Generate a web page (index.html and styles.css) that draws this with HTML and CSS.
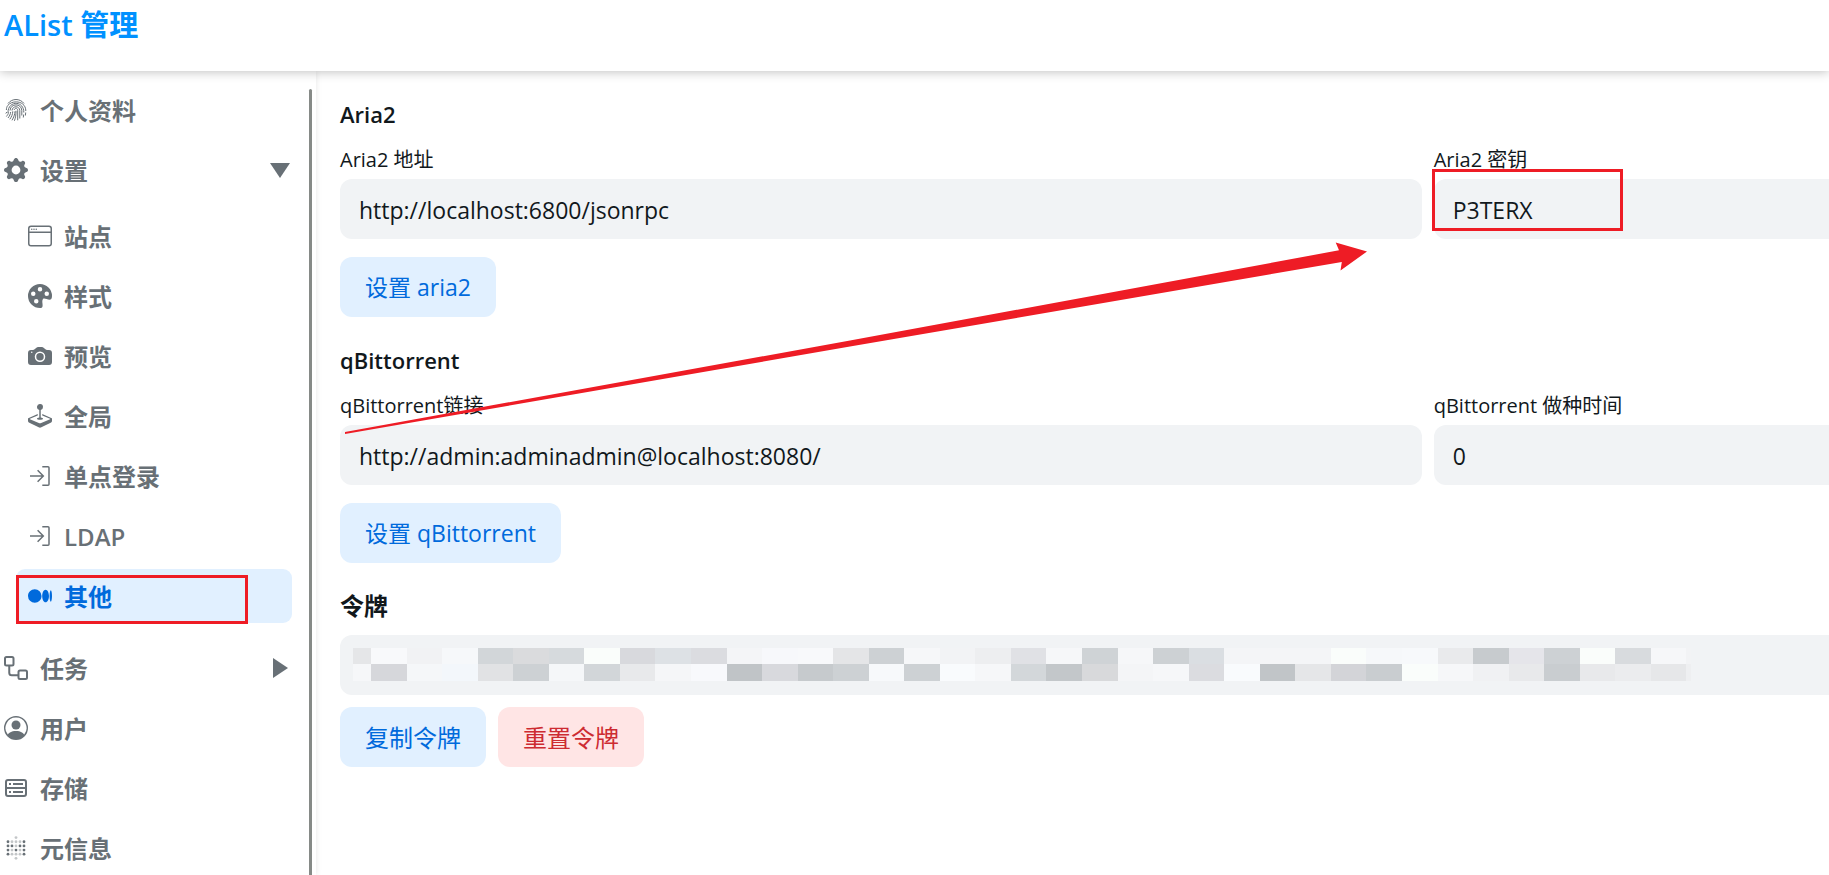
FILE: index.html
```
<!DOCTYPE html>
<html lang="zh-CN">
<head>
    <meta charset="UTF-8">
    <meta name="viewport" content="width=device-width, initial-scale=1.0">
    <title>AList 管理</title>
    <link rel="stylesheet" href="styles.css">
</head>
<body>
    <header class="header">
        <a href="#" class="brand">AList 管理</a>
    </header>

    <div class="container">
        <aside class="sidebar">
            <nav class="menu">
                <a href="#" class="menu-item">
                    <svg class="icon line thin" viewBox="0 0 24 24">
                        <path d="M4 5.500C8 .2 16 .2 20 5.500"/>
                        <path d="M2.400 12C2 1.500 22 .5 21.800 13"/>
                        <path d="M4 15C3.500 2.500 20 2 19.800 14.500"/>
                        <path d="M6 12.500C6.500 5 17.500 5 17.800 12.500v5"/>
                        <path d="M8 12.500c.5-5 7.500-5 7.800 0v8"/>
                        <path d="M10.200 12c.6-2.500 3.400-2.200 3.500.5v9.800"/>
                        <path d="M1.800 15.500l1-1.500M2.400 18.500c1.200-1.500 2-2.800 2.200-4M4 20c1.600-2 2.500-4 2.700-6M5.800 21.300c1.800-2.600 2.900-5 3-8M8 22.300c1.800-3 2.900-6 3-9M10.400 22.800c1.200-3 1.700-6 1.600-10M19.700 16.500l-.4 3M21.700 14.500l-.3 3"/>
                    </svg>
                    <span>个人资料</span>
                </a>
                <a href="#" class="menu-item">
                    <svg class="icon" viewBox="0 0 16 16"><path d="M9.405 1.050c-.413-1.400-2.397-1.400-2.810 0l-.1.340a1.464 1.464 0 0 1-2.105.872l-.310-.170c-1.283-.698-2.686.705-1.987 1.987l.169.311c.446.820.023 1.841-.872 2.105l-.340.1c-1.400.413-1.400 2.397 0 2.810l.340.1a1.464 1.464 0 0 1 .872 2.105l-.170.310c-.698 1.283.705 2.686 1.987 1.987l.311-.169a1.464 1.464 0 0 1 2.105.872l.1.340c.413 1.400 2.397 1.400 2.810 0l.1-.340a1.464 1.464 0 0 1 2.105-.872l.310.170c1.283.698 2.686-.705 1.987-1.987l-.169-.311a1.464 1.464 0 0 1 .872-2.105l.340-.1c1.400-.413 1.400-2.397 0-2.810l-.340-.1a1.464 1.464 0 0 1-.872-2.105l.170-.310c.698-1.283-.705-2.686-1.987-1.987l-.311.169a1.464 1.464 0 0 1-2.105-.872l-.1-.340zM8 10.930a2.929 2.929 0 1 1 0-5.860 2.929 2.929 0 0 1 0 5.858z"/></svg>
                    <span>设置</span>
                    <svg class="icon arrow" viewBox="0 0 24 24"><path d="M2 5h20L12 20z"/></svg>
                </a>
                <div class="submenu">
                    <a href="#" class="menu-item">
                        <svg class="icon" viewBox="0 0 16 16"><path d="M2.500 4a.5.5 0 1 0 0-1 .5.5 0 0 0 0 1zm2-.5a.5.5 0 1 1-1 0 .5.5 0 0 1 1 0zm1 .5a.5.5 0 1 0 0-1 .5.5 0 0 0 0 1z"/><path d="M2 1a2 2 0 0 0-2 2v10a2 2 0 0 0 2 2h12a2 2 0 0 0 2-2V3a2 2 0 0 0-2-2H2zm13 2v2H1V3a1 1 0 0 1 1-1h12a1 1 0 0 1 1 1zM2 14a1 1 0 0 1-1-1V6h14v7a1 1 0 0 1-1 1H2z"/></svg>
                        <span>站点</span>
                    </a>
                    <a href="#" class="menu-item">
                        <svg class="icon" viewBox="0 0 16 16"><path d="M12.433 10.070C14.133 10.585 16 11.150 16 8a8 8 0 1 0-8 8c1.996 0 1.826-1.504 1.649-3.080-.124-1.101-.252-2.237.351-2.920.465-.527 1.420-.237 2.433.070zM8 5a1.500 1.500 0 1 1 0-3 1.500 1.500 0 0 1 0 3zm4.500 3a1.500 1.500 0 1 1 0-3 1.500 1.500 0 0 1 0 3zM5 6.500a1.500 1.500 0 1 1-3 0 1.500 1.500 0 0 1 3 0zm.5 6.500a1.500 1.500 0 1 1 0-3 1.500 1.500 0 0 1 0 3z"/></svg>
                        <span>样式</span>
                    </a>
                    <a href="#" class="menu-item">
                        <svg class="icon" viewBox="0 0 16 16"><path d="M10.500 8.500a2.500 2.500 0 1 1-5 0 2.500 2.500 0 0 1 5 0z"/><path d="M2 4a2 2 0 0 0-2 2v6a2 2 0 0 0 2 2h12a2 2 0 0 0 2-2V6a2 2 0 0 0-2-2h-1.172a2 2 0 0 1-1.414-.586l-.828-.828A2 2 0 0 0 9.172 2H6.828a2 2 0 0 0-1.414.586l-.828.828A2 2 0 0 1 3.172 4H2zm.5 2a.5.5 0 1 1 0-1 .5.5 0 0 1 0 1zm9 2.500a3.500 3.500 0 1 1-7 0 3.500 3.500 0 0 1 7 0z"/></svg>
                        <span>预览</span>
                    </a>
                    <a href="#" class="menu-item">
                        <svg class="icon" viewBox="0 0 16 16"><path d="M10 2a2 2 0 0 1-1.500 1.937v5.087c.863.083 1.500.377 1.500.726 0 .414-.895.750-2 .750s-2-.336-2-.750c0-.350.637-.643 1.500-.726V3.937A2 2 0 1 1 10 2z"/><path d="M0 9.665v1.717a1 1 0 0 0 .553.894l6.553 3.277a2 2 0 0 0 1.788 0l6.553-3.277a1 1 0 0 0 .553-.894V9.665c0-.1-.060-.190-.152-.230L9.500 6.715v.993l5.227 2.178a.125.125 0 0 1 .001.230l-5.940 2.546a2 2 0 0 1-1.576 0l-5.940-2.546a.125.125 0 0 1 .001-.230L6.500 7.708l-.013-.988L.152 9.435a.250.250 0 0 0-.152.230z"/></svg>
                        <span>全局</span>
                    </a>
                    <a href="#" class="menu-item">
                        <svg class="icon line" viewBox="0 0 24 24"><path d="M2 12h13.500M9.600 6.300l5.700 5.700-5.700 5.700M14.300 2.700H20a1 1 0 0 1 1 1v16.600a1 1 0 0 1-1 1h-5.700"/></svg>
                        <span>单点登录</span>
                    </a>
                    <a href="#" class="menu-item">
                        <svg class="icon line" viewBox="0 0 24 24"><path d="M2 12h13.500M9.600 6.300l5.700 5.700-5.700 5.700M14.300 2.700H20a1 1 0 0 1 1 1v16.600a1 1 0 0 1-1 1h-5.700"/></svg>
                        <span>LDAP</span>
                    </a>
                    <a href="#" class="menu-item active">
                        <svg class="icon" viewBox="0 0 16 16"><path d="M9.025 8c0 2.485-2.020 4.500-4.513 4.500A4.506 4.506 0 0 1 0 8c0-2.486 2.020-4.500 4.512-4.500A4.506 4.506 0 0 1 9.025 8zm4.950 0c0 2.340-1.010 4.236-2.256 4.236-1.246 0-2.256-1.897-2.256-4.236 0-2.340 1.010-4.236 2.256-4.236 1.246 0 2.256 1.897 2.256 4.236zM16 8c0 2.096-.355 3.795-.794 3.795-.438 0-.793-1.700-.793-3.795 0-2.096.355-3.795.794-3.795.438 0 .793 1.699.793 3.795z"/></svg>
                        <span>其他</span>
                        <i class="mark mark-menu"></i>
                    </a>
                </div>
                <a href="#" class="menu-item">
                    <svg class="icon line bold" viewBox="0 0 24 24"><rect x="1" y="1" width="8.500" height="8.500" rx="1.500"/><rect x="14.500" y="14.500" width="8.500" height="8.500" rx="1.500"/><path d="M5.250 9.500v7.250a2.500 2.500 0 0 0 2.500 2.500h6.750"/></svg>
                    <span>任务</span>
                    <svg class="icon arrow" viewBox="0 0 24 24"><path d="M5 2v20l15-10z"/></svg>
                </a>
                <a href="#" class="menu-item">
                    <svg class="icon" viewBox="0 0 16 16"><path d="M11 6a3 3 0 1 1-6 0 3 3 0 0 1 6 0z"/><path fill-rule="evenodd" d="M0 8a8 8 0 1 1 16 0A8 8 0 0 1 0 8zm8-7a7 7 0 0 0-5.468 11.370C3.242 11.226 4.805 10 8 10s4.757 1.225 5.468 2.370A7 7 0 0 0 8 1z"/></svg>
                    <span>用户</span>
                </a>
                <a href="#" class="menu-item">
                    <svg class="icon line bold" viewBox="0 0 24 24"><rect x="2" y="4" width="20" height="16" rx="2"/><path d="M2 12h20M5 8h2M9 8h10M5 16h2M9 16h10"/></svg>
                    <span>存储</span>
                </a>
                <a href="#" class="menu-item">
                    <svg class="icon" viewBox="0 0 24 24" id="metaIcon"></svg>
                    <span>元信息</span>
                </a>
            </nav>
            <div class="scroll-thumb"></div>
        </aside>

        <main class="content">
            <div class="panel">
                <!-- Aria2 Section -->
                <section class="section">
                    <h2>Aria2</h2>
                    <div class="fields">
                        <div class="field">
                            <label for="aria2Uri">Aria2 地址</label>
                            <input type="text" id="aria2Uri" value="http://localhost:6800/jsonrpc">
                        </div>
                        <div class="field">
                            <label for="aria2Secret">Aria2 密钥</label>
                            <input type="text" id="aria2Secret" value="P3TERX">
                            <i class="mark mark-secret"></i>
                        </div>
                    </div>
                    <button type="button" class="btn">设置 aria2</button>
                </section>

                <!-- qBittorrent Section -->
                <section class="section">
                    <h2>qBittorrent</h2>
                    <div class="fields">
                        <div class="field">
                            <label for="qbUrl">qBittorrent链接</label>
                            <input type="text" id="qbUrl" value="http://admin:adminadmin@localhost:8080/">
                        </div>
                        <div class="field">
                            <label for="qbSeedtime">qBittorrent 做种时间</label>
                            <input type="text" id="qbSeedtime" value="0">
                        </div>
                    </div>
                    <button type="button" class="btn">设置 qBittorrent</button>
                </section>

                <!-- Token Section -->
                <section class="section token-section">
                    <h2 id="tokenTitle">令牌</h2>
                    <div class="token">
                        <input type="text" aria-labelledby="tokenTitle" readonly>
                        <svg class="mosaic" id="mosaic" width="1338" height="33"></svg>
                    </div>
                    <div class="btn-group">
                        <button type="button" class="btn">复制令牌</button>
                        <button type="button" class="btn btn-danger">重置令牌</button>
                    </div>
                </section>

                <svg class="pointer" width="1030" height="200" viewBox="340 238 1030 200">
                    <path d="M345 432L850 340.500 1339 250.300 1335.700 242.500 1367 251.500 1340.500 270.500 1341.800 262 850 346.500 345 434z"/>
                </svg>
            </div>
        </main>
    </div>

    <script>
        const svgNS = 'http://www.w3.org/2000/svg';

        function addShape(parent, tag, attrs) {
            const el = document.createElementNS(svgNS, tag);
            Object.keys(attrs).forEach(key => el.setAttribute(key, attrs[key]));
            parent.appendChild(el);
        }

        // Blocks that hide the token, one list per row
        const mosaicRows = [
            'e5e6e8 f8f9fb f1f2f4 f6f8fa d2d6d9 dadbdd d6dadd fafdfb d8d9dd dde1e5 dbdce0 f4f5f7 f7f8fb f8f9fb e4e5e7 cdd1d4 f6f7f9 f2f3f5 edeef0 e0e1e5 f6f7f9 cfd3d6 f6f7f9 cdd1d4 dadee2 f4f5f7 f4f5f7 f4f5f7 fafdfb f6f8fa f7f9fb e9eaec c7cbce e5e5ea cdd1d4 fafdfb d8dbde f6f7f9 f2f3f5',
            'f6f7f9 d6d7db f5f7f9 f3f7fb e1e2e4 cdd1d4 f5f7f9 d2d6d9 e8e9eb f5f6f8 f8f9fc c0c4c7 d8d9dd c6cacd cdd1d4 f7f9fb cdd1d4 f9fbfd f6f7f9 d3d7da c3c7ca d8d9db f4f5f7 f6f7f9 dbdce0 f9fbfd c1c5c8 e5e6e8 d3d4d8 c9cdd0 fafdfb f6f7f9 f0f1f3 e8e9eb c9cdd0 e8e9eb ebecee e6e7e9 eeeff1'
        ];
        const mosaic = document.getElementById('mosaic');
        mosaicRows.forEach((row, r) => {
            row.split(' ').forEach((color, i) => {
                const x = i === 0 ? 0 : Math.round(18 + (i - 1) * 35.55);
                const end = Math.round(18 + i * 35.55);
                addShape(mosaic, 'rect', { x: x, y: r * 16, width: end - x, height: r ? 17 : 16, fill: '#' + color });
            });
        });

        // Dots of the meta icon: 1 is solid, 0 is faint
        const metaIcon = document.getElementById('metaIcon');
        ['--0--', '10001', '11011', '10101', '10001', '--0--'].forEach((row, r) => {
            row.split('').forEach((dot, c) => {
                if (dot === '-') return;
                addShape(metaIcon, 'circle', { cx: 4 + c * 4, cy: 1.6 + r * 4.15, r: 1.4, opacity: dot === '1' ? 1 : 0.4 });
            });
        });
    </script>
</body>
</html>
```
FILE: styles.css
```
* {
    box-sizing: border-box;
    margin: 0;
    padding: 0;
}

body {
    font-family: "Open Sans", "Noto Sans CJK SC", sans-serif;
    font-size: 24px;
    line-height: 36px;
    color: #11181c;
    background: #ffffff;
    min-height: 100vh;
    display: flex;
    flex-direction: column;
    overflow-x: hidden;
}

.header {
    position: relative;
    z-index: 2;
    height: 71px;
    padding: 3px 4px;
    background: #ffffff;
    box-shadow: 0 1px 10px rgba(0, 0, 0, 0.25);
}

.brand {
    font-size: 29px;
    line-height: 44px;
    font-weight: 600;
    color: #0091ff;
    text-decoration: none;
}

.container {
    flex: 1;
    display: flex;
}

/* Sidebar */
.sidebar {
    width: 316px;
    flex-shrink: 0;
    display: flex;
    padding-right: 4px;
    box-shadow: 0 0 6px rgba(0, 0, 0, 0.1);
}

.menu {
    flex: 1;
    display: flex;
    flex-direction: column;
    gap: 6px;
    padding: 12px 17px 0 0;
}

.menu-item {
    position: relative;
    display: flex;
    align-items: center;
    gap: 12px;
    height: 54px;
    padding-left: 4px;
    border-radius: 9px;
    color: #687076;
    font-weight: 600;
    text-decoration: none;
}

.menu-item span {
    padding-top: 2px;
}

.submenu {
    display: flex;
    flex-direction: column;
    gap: 6px;
    margin: 6px 0 12px 16px;
}

.submenu .menu-item {
    padding-left: 12px;
}

.menu-item.active {
    background: #e1f0ff;
    color: #006adc;
}

.icon {
    width: 24px;
    height: 24px;
    flex-shrink: 0;
    fill: currentColor;
}

.icon.line {
    fill: none;
    stroke: currentColor;
    stroke-width: 1.5;
}

.icon.thin {
    stroke-width: 1;
}

.icon.bold {
    stroke-width: 2;
}

.arrow {
    margin-left: auto;
}

.scroll-thumb {
    width: 3px;
    margin-top: 18px;
    border-radius: 3px 3px 0 0;
    background: #868a87;
}

/* Settings */
.content {
    flex: 1;
    min-width: 0;
    padding: 24px 0 24px 24px;
    overflow: hidden;
}

/* The second column runs past the right edge */
.panel {
    position: relative;
    width: 146.1%;
    display: flex;
    flex-direction: column;
    gap: 24px;
}

.section h2 {
    font-size: 22px;
    line-height: 38px;
    font-weight: 600;
    margin-bottom: 10px;
}

.fields {
    display: grid;
    grid-template-columns: 1fr 1fr;
    gap: 12px;
    margin-bottom: 18px;
}

.field {
    position: relative;
    display: flex;
    flex-direction: column;
    gap: 2px;
}

.field label {
    font-size: 20px;
    line-height: 34px;
}

input {
    width: 100%;
    height: 60px;
    padding: 2px 19px 0;
    border: none;
    border-radius: 12px;
    background: #f1f3f5;
    color: #11181c;
    font-family: inherit;
    font-size: 23px;
}

.token {
    position: relative;
    display: flex;
    margin-bottom: 12px;
}

.mosaic {
    position: absolute;
    left: 13px;
    top: 13px;
}

.btn-group {
    display: flex;
    gap: 12px;
}

.btn {
    height: 60px;
    padding: 0 25px 2px;
    border: none;
    border-radius: 12px;
    background: #e1f0ff;
    color: #006adc;
    font-family: inherit;
    font-size: 23px;
    cursor: pointer;
}

.token-section h2,
.token-section .btn {
    font-size: 24px;
}

.btn-danger {
    background: #ffe5e5;
    color: #cd2b31;
}

/* Red annotations */
.mark {
    position: absolute;
    border: 3px solid #ee1c25;
    pointer-events: none;
}

.mark-menu {
    left: 0;
    top: 6px;
    width: 232px;
    height: 49px;
}

.mark-secret {
    left: -2px;
    top: 26px;
    width: 191px;
    height: 62px;
}

.pointer {
    position: absolute;
    left: 0;
    top: 143px;
    fill: #ee1c25;
    pointer-events: none;
}
```
